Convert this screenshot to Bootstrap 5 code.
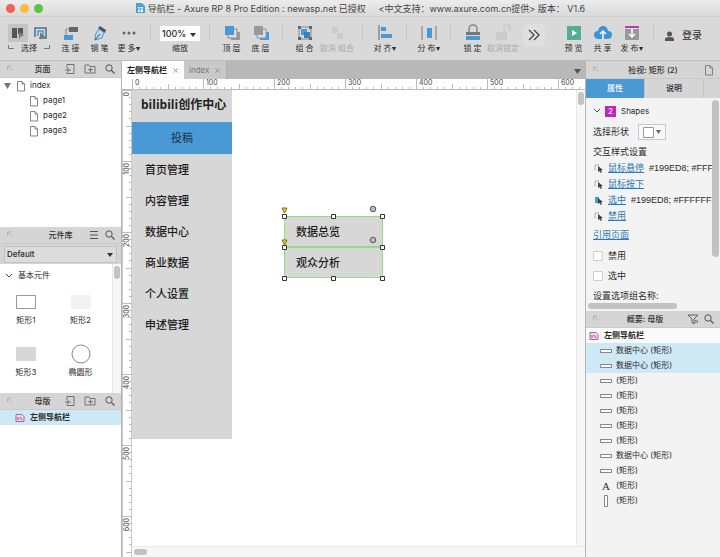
<!DOCTYPE html>
<html lang="zh-CN">
<head>
<meta charset="utf-8">
<meta name="viewport" content="width=device-width, initial-scale=1">
<title>导航栏 - Axure RP 8 Pro Edition</title>
<link href="https://cdn.jsdelivr.net/npm/bootstrap@5.3.0/dist/css/bootstrap.min.css" rel="stylesheet">
<style>
body{font-family:Inter,"Noto Sans CJK SC",sans-serif;font-size:8px;line-height:15px;color:#2b2b2b;background:#fff}
button,select,input{font:inherit;color:inherit}
button{border:0;background:none;padding:0}
svg{display:block;flex:none}
.ic{width:12px;height:12px}
.title-bar{height:17px;background:linear-gradient(#ececec,#dadada);border-bottom:1px solid #cfcfcf;font-size:9px;color:#444}
.win-dots{gap:5px;padding-left:6px}
.win-dot{width:9px;height:9px;border-radius:50%}
.doc-title{gap:2px;padding-right:44px}
.toolbar{height:44px;background:#d9d9d9;border-bottom:1px solid #bdbdbd;padding:7px 0 0 8px}
.tool{width:29px;flex:none;display:flex;flex-direction:column;align-items:center;line-height:12px;white-space:nowrap}
.tool svg{width:18px;height:18px}
.tool.wide{width:36px}
.tool.mid{width:32px}
.tool:disabled{color:#aaa}
.tool .more-arrows{width:22px;height:22px;border-radius:4px;background:#dfdfdf}
.pick-group{width:42px;flex:none;white-space:nowrap}
.pick-group button.on{background:#c4c4c4}
.pick-group button{width:20px;height:18px;display:flex;justify-content:center}
.pick-group svg{width:18px;height:18px}
.pick-group .corner{width:6px;height:6px}
.pick-label{line-height:12px}
.divide{width:15px;height:18px;flex:none}
.divide::after{content:"";display:block;width:1px;height:18px;margin:0 auto;background:#c8c8c8}
.space{width:6px;flex:none}
.space.large{width:11px}
.zoom-box{width:44px;flex:none;line-height:12px}
.drop{position:relative;display:block}
.drop select{appearance:none;display:block;width:100%}
.drop::after{content:"";position:absolute;right:4px;top:50%;margin-top:-1px;border:3px solid transparent;border-top:4px solid #333;border-bottom:0;pointer-events:none}
.zoom-box .drop{width:40px;margin:2px 0 1px}
.zoom-box select{height:15px;line-height:15px;border:0;background:#fff;font-size:9px;font-weight:500;padding:0 2px}
.side{width:122px;flex:none;border-right:1px solid #b4b4b4}
.inspect{width:135px;flex:none;border-left:1px solid #b4b4b4;background:#f3f3f3}
.head{height:17px;background:#d5d5d5;flex:none;padding:0 5px;border-bottom:1px solid #cacaca;line-height:16px}
.inspect .head.first{height:18px}
.head h2{font-size:8px;line-height:16px;font-weight:500;margin:0;color:#333}
.trow{height:15px;display:flex;align-items:center;width:100%;white-space:nowrap}
.trow .ic{margin-right:6px}
.trow .ic.near{margin-right:3px}
.sel{background:#cfe8f6}
.master-row{padding-left:14px}
.master-row .ic{margin-right:4px}
.pages{height:149px;flex:none}
.lib-top{background:#d5d5d5;height:20px;flex:none}
.lib-top select{border:1px solid #c2c2c2;background:#dcdcdc;height:17px;line-height:15px;font-weight:500;padding:0 2px}
.lib{height:129px;flex:none}
.lib-grid{display:grid;grid-template-columns:52px 57px;row-gap:17px;padding-top:9px}
.lib-grid button{display:flex;flex-direction:column;align-items:center;gap:1px;line-height:14px}
.lib-grid svg{width:22px;height:20px}
.track{width:9px;flex:none;background:#f7f7f7;border-left:1px solid #e8e8e8;padding:2px 1px}
.thumb{background:#c2c2c2;border-radius:4px}
.lib .thumb{height:13px}
.tabs{height:18px;background:#b8b8b8;flex:none}
.tabs button{padding:0 6px 0 5px;line-height:18px;gap:6px;display:flex;align-items:center}
.tabs .on{background:#fff;font-weight:700;color:#222}
.tabs .off{background:#c9c9c9;color:#777;border-right:1px solid #b0b0b0}
.tabs .close-x{width:5px;height:5px}
.ruler-x{height:11px}
.ruler-y{width:10px;flex:none}
.site-nav{width:100px;height:349px;background:#d7d7d7;font-size:11px;color:#222}
.site-nav h1{font-family:"Open Sans","Noto Sans CJK SC",sans-serif;font-size:12px;line-height:30px;height:32px;margin:0;padding-left:9px;font-weight:700;white-space:nowrap}
.site-nav a{display:block;height:31px;line-height:33px;padding-left:13px;color:#1b1b1b;text-decoration:none;font-weight:500}
.site-nav a.hot{background:#4899d4;height:32px;line-height:32px;text-align:center;padding:0;color:#234;font-weight:400}
.shape{position:absolute;left:152px;width:99px;height:31px;background:#d7d7d7;font-size:11px;line-height:31px;padding-left:11px;color:#1b1b1b;font-weight:500;border:1px solid #96dc78}
.shape.first{top:126px}
.shape.second{top:157px}
.handles{position:absolute;left:146px;top:112px;width:112px;height:82px}
.scroll-y{width:9px}
.scroll-y .thumb{height:13px}
.scroll-x{height:11px;flex:none;background:#f7f7f7;border-top:1px solid #e8e8e8;padding:2px}
.scroll-x .thumb{width:13px;height:6px}
.itabs{height:19px;background:#d5d5d5}
.itabs button{width:59px;border-right:1px solid #c4c4c4;font-weight:500}
.itabs button.on{background:#4899d4;color:#fff}
.props{height:202px;font-size:9px;line-height:16px;padding:4px 0 0 7px}
.props a{color:#2b7ab3}
.props .line{height:16px;display:flex;align-items:center;white-space:nowrap;gap:5px}
.props .line.state{gap:3px}
.props .line.state span{font-family:"Liberation Sans",sans-serif}
.props .line.state a{margin-right:2px}
.props .tall{height:20px}
.props .intro{height:18px}
.props .pick{height:24px}
.props .ref{height:22px}
.kind{font-size:8px}
.badge-2{width:11px;height:11px;background:#c026b8;color:#fff;font-size:8px;line-height:11px;text-align:center}
.shape-pick{border:1px solid #c9c9c9;width:28px;height:16px;background:#f8f8f8}
.props input{appearance:none;width:10px;height:10px;margin:0;border:1px solid #cfcfcf;background:#fff;border-radius:1px}
.ptrack{width:8px;padding:2px 1px 0 0;flex:none}
.ptrack .thumb{height:157px}
.hbar{height:11px;padding:3px 2px 2px}
.hbar .thumb{width:89px;height:6px}
.outline .trow{padding-left:14px}
.outline .trow .ic{margin-right:4px}
.outline .trow.root{padding-left:2px;background:#fafafa;font-weight:700}
.outline .letter{font:11px/12px "Liberation Serif",serif}
.login{font-size:10px;margin-left:4px}
.red{background:#ee6257}.yellow{background:#f6be3b}.green{background:#5ac449}
</style>
<script src="https://cdn.jsdelivr.net/npm/bootstrap@5.3.0/dist/js/bootstrap.bundle.min.js"></script>
</head>
<body>
<svg width="0" height="0" class="position-absolute" aria-hidden="true">
<symbol id="pin" viewBox="0 0 12 12"><path d="M2.500 7V3h4M2.500 3l4.500 4.500" fill="none" stroke="#b4b4b4"/></symbol>
<symbol id="page" viewBox="0 0 12 12"><path d="M2.500 1.500h4.500l2.500 2.500v7h-7zM7 1.500V4h2.500" fill="none" stroke="#777" stroke-width=".9"/></symbol>
<symbol id="addpage" viewBox="0 0 12 12"><path d="M3 5V1.500h7v9H3V9M1 7h6M4 5v4" fill="none" stroke="#666" stroke-width=".9"/></symbol>
<symbol id="addfolder" viewBox="0 0 12 12"><path d="M1 10V2h4l1 1.500h5V10zM4 6.700h5M6.500 4.500v4.500" fill="none" stroke="#666" stroke-width=".9"/></symbol>
<symbol id="find" viewBox="0 0 12 12"><circle cx="5" cy="5" r="3.200" fill="none" stroke="#555"/><path d="m7.500 7.500 3 3" stroke="#555" stroke-width="1.300"/></symbol>
<symbol id="lines" viewBox="0 0 12 12"><path d="M2 2.500h8M2 6h8M2 9.500h8" stroke="#555"/></symbol>
<symbol id="filter" viewBox="0 0 12 12"><path d="M1 2h10L7 6v5L5 9.500V6zM8 7l3 3M11 7 8 10" fill="none" stroke="#555" stroke-width=".9"/></symbol>
<symbol id="master" viewBox="0 0 12 12"><path d="M2 2.500h6l2 2v5H2z" fill="#f3d6ee" stroke="#8c6488" stroke-width=".9"/><path d="M4 5v3M6 5l2 3" stroke="#b03d9c"/></symbol>
<symbol id="bar" viewBox="0 0 12 12"><path d="M.500 4.500h11v3H.500z" fill="#fff" stroke="#777" stroke-width=".9"/></symbol>
<symbol id="vbar" viewBox="0 0 12 12"><path d="M4.500.500h3v11h-3z" fill="#fff" stroke="#777" stroke-width=".9"/></symbol>
<symbol id="ptr" viewBox="0 0 12 12"><path d="M2 8V3h5" fill="none" stroke="#888" stroke-dasharray="1.500 1"/><path d="m5 4 5 4-2 .3 1 2.200-1.300.4-.9-2L5 10z" fill="#444"/></symbol>
<symbol id="ptrb" viewBox="0 0 12 12"><path d="M2 3h4v6H2z" fill="#4899d4"/><path d="m5 4 5 4-2 .3 1 2.200-1.300.4-.9-2L5 10z" fill="#444"/></symbol>
<symbol id="close" viewBox="0 0 5 5"><path d="m.500.500 4 4M4.500.500l-4 4" stroke="#888" stroke-width=".9"/></symbol>
</svg>

<div class="d-flex flex-column vh-100 overflow-hidden">
<header class="title-bar d-flex align-items-center flex-shrink-0">
  <div class="win-dots d-flex"><span class="win-dot red"></span><span class="win-dot yellow"></span><span class="win-dot green"></span></div>
  <div class="doc-title flex-fill d-flex justify-content-center align-items-center text-nowrap">
    <svg class="ic" viewBox="0 0 12 12"><path d="M2 1h6l3 3v7H2z" fill="#4ba3d3"/><path d="M4 5h5v5H4z" fill="#fff"/><path d="M6 5v5M4 7h5" stroke="#4ba3d3"/></svg>
    <span>导航栏 - Axure RP 8 Pro Edition : newasp.net 已授权 &nbsp;&nbsp;&nbsp; &lt;中文支持：www.axure.com.cn提供&gt; 版本：&nbsp;V1.6</span>
  </div>
</header>

<nav class="toolbar d-flex flex-shrink-0" aria-label="工具栏">
  <div class="pick-group">
    <div class="d-flex justify-content-between">
      <button class="on" aria-label="相交选择"><svg viewBox="0 0 18 18"><path d="M3 4h5v10H3zM9 4h5v6H9z" fill="#555"/><path d="m10 7 5 5-3 .3L10 15z" fill="#777"/></svg></button>
      <button aria-label="包含选择"><svg viewBox="0 0 18 18"><path d="M4 13V4h11v10H8" fill="none" stroke="#4e6d82" stroke-width="1.500"/><path d="M7 12V7h5v5" fill="none" stroke="#479bcf" stroke-width="1.500"/><path d="m9 8 5 5-3 .4-2 2z" fill="#777"/></svg></button>
    </div>
    <div class="pick-label d-flex justify-content-between align-items-center"><svg class="corner" viewBox="0 0 6 6"><path d="M.500 0v3.500H6" fill="none" stroke="#777"/></svg>选择<svg class="corner" viewBox="0 0 6 6"><path d="M5.500 0v3.500H0" fill="none" stroke="#777"/></svg></div>
  </div>
  <div class="space"></div>
  <button class="tool"><svg viewBox="0 0 18 18"><path d="M7 3h9v5H7z" fill="#666"/><path d="M2 11h9v5H2z" fill="#4899d4"/><path d="M7 5H4v6" fill="none" stroke="#888"/></svg>连 接</button>
  <button class="tool"><svg viewBox="0 0 18 18"><path d="m8 5 5 3-2 6-7 2 1-7z" fill="#b9d8ec" stroke="#4899d4"/><path d="m9 2 6 4-1 3-7-5z" fill="#555"/><path d="m4 16 5-6" stroke="#555"/></svg>钢 笔</button>
  <button class="tool"><svg viewBox="0 0 18 18"><g fill="#666"><circle cx="4" cy="9" r="1.500"/><circle cx="9" cy="9" r="1.500"/><circle cx="14" cy="9" r="1.500"/></g></svg>更 多▾</button>
  <div class="divide"></div>
  <div class="zoom-box d-flex flex-column align-items-center"><div class="drop"><select id="zoom"><option>100%</option></select></div><label for="zoom">缩放</label></div>
  <div class="divide"></div>
  <button class="tool"><svg viewBox="0 0 18 18"><path d="M8 8h9v8H8z" fill="#999"/><path d="M5 5h9v9H5z" fill="#ddd" stroke="#888"/><path d="M2 2h9v9H2z" fill="#4899d4"/></svg>顶 层</button>
  <button class="tool"><svg viewBox="0 0 18 18"><path d="M8 8h9v8H8z" fill="#4899d4"/><path d="M5 5h9v9H5z" fill="#ddd" stroke="#79b"/><path d="M2 2h9v9H2z" fill="#999"/></svg>底 层</button>
  <div class="divide"></div>
  <button class="tool"><svg viewBox="0 0 18 18"><path d="M3 3h12v12H3z" fill="none" stroke="#888"/><path d="M5 5h6v6H5z" fill="#4899d4"/><path d="M8 8h6v6H8z" fill="#3a80b5"/><path d="M2 2h3v3H2zM13 2h3v3h-3zM2 13h3v3H2zM13 13h3v3h-3z" fill="#666"/></svg>组 合</button>
  <button class="tool wide" disabled><svg viewBox="0 0 18 18"><path d="M4 3h6v6H4zM9 9h6v6H9z" fill="#cbcbcb"/></svg>取消 组合</button>
  <div class="divide"></div>
  <button class="tool"><svg viewBox="0 0 18 18"><path d="M3 1v15" stroke="#888" stroke-width="1.500"/><path d="M5 3h5v4H5zM5 10h11v4H5z" fill="#4899d4"/></svg>对 齐▾</button>
  <div class="divide"></div>
  <button class="tool"><svg viewBox="0 0 18 18"><path d="M2 2v14M16 2v14" stroke="#999" stroke-width="1.500"/><path d="M7 4h5v10H7z" fill="#4899d4"/></svg>分 布▾</button>
  <div class="divide"></div>
  <button class="tool"><svg viewBox="0 0 18 18"><path d="M5 9V5q0-4 4-4t4 4v4" fill="none" stroke="#888" stroke-width="1.500"/><path d="M2 8h14v3H2z" fill="#777"/><path d="M2 12h14v4H2z" fill="#4899d4"/></svg>锁 定</button>
  <button class="tool mid" disabled><svg viewBox="0 0 18 18"><path d="M10 8V4q0-3 3-3t3 3v3" fill="none" stroke="#ccc" stroke-width="2"/><path d="M2 8h11v8H2z" fill="#cbcbcb"/></svg>取消锁定</button>
  <button class="tool" aria-label="更多工具"><svg class="more-arrows" viewBox="0 0 22 22"><path d="m6 6 5 5-5 5M11 6l5 5-5 5" fill="none" stroke="#444" stroke-width="1.300"/></svg></button>
  <div class="space large"></div>
  <button class="tool"><svg viewBox="0 0 18 18"><path d="M2 2h14v14H2z" fill="#56ad92"/><path d="m7 6 5 3-5 3z" fill="#fff"/></svg>预 览</button>
  <button class="tool"><svg viewBox="0 0 18 18"><path d="M4 15q-4-1-4-4 0-4 4-4 1-5 5-5t5 5q4 0 4 4 0 3-4 4z" fill="#3c94d1"/><path d="M9 15V8M6 10l3-3 3 3" fill="none" stroke="#fff" stroke-width="1.500"/></svg>共 享</button>
  <button class="tool"><svg viewBox="0 0 18 18"><path d="M2 2h14v2H2z" fill="#bd36b0"/><path d="M2 5h14v11H2z" fill="#999"/><path d="M9 5v8M6 10l3 3 3-3" fill="none" stroke="#fff" stroke-width="1.500"/></svg>发 布▾</button>
  <div class="divide"></div>
  <button class="login d-flex align-items-center align-self-start gap-2 pt-1"><svg width="9" height="10"><circle cx="4.500" cy="3" r="2.500" fill="#555"/><path d="M0 10V8q0-2 4.500-2T9 8v2z" fill="#555"/></svg>登录</button>
</nav>

<main class="d-flex flex-fill overflow-hidden">
  <aside class="side d-flex flex-column">
    <div class="head d-flex align-items-center"><svg class="ic"><use href="#pin"/></svg><h2 class="flex-fill text-center ps-1">页面</h2><div class="d-flex gap-1"><svg class="ic me-1"><use href="#addpage"/></svg><svg class="ic me-1"><use href="#addfolder"/></svg><svg class="ic"><use href="#find"/></svg></div></div>
    <div class="pages">
      <div class="trow ps-1"><svg width="7" height="6" class="me-1"><path d="M0 0h7L3.500 6z" fill="#777"/></svg><svg class="ic near"><use href="#page"/></svg>index</div>
      <div class="ps-4">
        <div class="trow"><svg class="ic ms-1 near"><use href="#page"/></svg>page1</div>
        <div class="trow"><svg class="ic ms-1 near"><use href="#page"/></svg>page2</div>
        <div class="trow"><svg class="ic ms-1 near"><use href="#page"/></svg>page3</div>
      </div>
    </div>
    <div class="head d-flex align-items-center"><svg class="ic"><use href="#pin"/></svg><h2 class="flex-fill text-center ps-3">元件库</h2><svg class="ic me-1"><use href="#lines"/></svg><svg class="ic"><use href="#find"/></svg></div>
    <div class="lib-top d-flex align-items-center px-1"><div class="drop w-100"><select aria-label="元件库"><option>Default</option></select></div></div>
    <div class="lib d-flex">
      <div class="flex-fill pt-1">
        <div class="trow ps-1"><svg width="10" height="6" class="me-1"><path d="m2 1 3 3 3-3" fill="none" stroke="#444"/></svg>基本元件</div>
        <div class="lib-grid">
          <button><svg><path d="M1.500 3.500h19v13h-19z" fill="#fff" stroke="#999"/></svg>矩形1</button>
          <button><svg><path d="M1 3h20v14H1z" fill="#f2f2f2"/></svg>矩形2</button>
          <button><svg><path d="M1 3h20v14H1z" fill="#d7d7d7"/></svg>矩形3</button>
          <button><svg><circle cx="11" cy="10" r="9" fill="#fff" stroke="#888"/></svg>椭圆形</button>
        </div>
      </div>
      <div class="track"><div class="thumb"></div></div>
    </div>
    <div class="head d-flex align-items-center"><svg class="ic"><use href="#pin"/></svg><h2 class="flex-fill text-center ps-1">母版</h2><div class="d-flex gap-1"><svg class="ic me-1"><use href="#addpage"/></svg><svg class="ic me-1"><use href="#addfolder"/></svg><svg class="ic"><use href="#find"/></svg></div></div>
    <div class="trow sel master-row fw-bold"><svg class="ic"><use href="#master"/></svg>左侧导航栏</div>
  </aside>

  <section class="flex-fill d-flex flex-column overflow-hidden">
    <div class="tabs d-flex"><button class="on">左侧导航栏 <svg class="close-x"><use href="#close"/></svg></button><button class="off">index <svg class="close-x"><use href="#close"/></svg></button><svg class="ms-auto me-1 mt-2" width="7" height="5"><path d="M0 0h7L3.500 5z" fill="#555"/></svg></div>
    <svg class="ruler-x w-100" id="rx"></svg>
    <div class="d-flex flex-fill overflow-hidden">
      <svg class="ruler-y h-100" id="ry"></svg>
      <div class="flex-fill d-flex flex-column overflow-hidden">
        <div class="flex-fill d-flex overflow-hidden">
          <div class="flex-fill position-relative overflow-hidden">
            <nav class="site-nav"><h1>bilibili创作中心</h1><a class="hot" href="#">投稿</a><a href="#">首页管理</a><a href="#">内容管理</a><a href="#">数据中心</a><a href="#">商业数据</a><a href="#">个人设置</a><a href="#">申述管理</a></nav>
            <div class="shape first">数据总览</div>
            <div class="shape second">观众分析</div>
            <svg class="handles" viewBox="0 0 112 82"><g fill="#fff" stroke="#333"><path d="M4.500 12.500h4v4h-4zM53.500 12.500h4v4h-4zM102.500 12.500h4v4h-4zM4.500 43.500h4v4h-4zM102.500 43.500h4v4h-4zM4.500 74.500h4v4h-4zM53.500 74.500h4v4h-4zM102.500 74.500h4v4h-4z"/></g><path d="M4 6h5L6.500 11zM4 38h5L6.500 43z" fill="#f5c83a" stroke="#8a6a10"/><g fill="#bbb" stroke="#555"><circle cx="95" cy="7" r="2.800"/><circle cx="95" cy="38" r="2.800"/></g></svg>
          </div>
          <div class="track scroll-y"><div class="thumb"></div></div>
        </div>
        <div class="scroll-x"><div class="thumb"></div></div>
      </div>
    </div>
  </section>

  <aside class="inspect d-flex flex-column">
    <div class="head first d-flex align-items-center"><svg class="ic"><use href="#pin"/></svg><h2 class="flex-fill text-center">检视: 矩形 (2)</h2><svg class="ic"><use href="#page"/></svg></div>
    <div class="itabs d-flex flex-shrink-0"><button class="on">属性</button><button>说明</button></div>
    <div class="d-flex overflow-hidden flex-shrink-0">
      <div class="props flex-fill overflow-hidden">
        <div class="line intro"><svg width="7" height="6"><path d="m1 1 3 3 3-3" fill="none" stroke="#555"/></svg><span class="badge-2">2</span><span class="kind">Shapes</span></div>
        <div class="line pick"><label for="pick">选择形状</label><button id="pick" class="shape-pick d-flex align-items-center justify-content-between ms-1 px-1"><svg width="11" height="11"><path d="M.500.500h10v10H.500z" fill="#fff" stroke="#999"/></svg><svg width="5" height="4"><path d="M0 0h5L2.500 4z" fill="#666"/></svg></button></div>
        <div class="line">交互样式设置</div>
        <div class="line state"><svg class="ic"><use href="#ptr"/></svg><a href="#">鼠标悬停</a><span>#199ED8; #FFF</span></div>
        <div class="line state"><svg class="ic"><use href="#ptr"/></svg><a href="#">鼠标按下</a></div>
        <div class="line state"><svg class="ic"><use href="#ptrb"/></svg><a href="#">选中</a><span>#199ED8; #FFFFFF;</span></div>
        <div class="line state"><svg class="ic"><use href="#ptr"/></svg><a href="#">禁用</a></div>
        <div class="line ref"><a href="#">引用页面</a></div>
        <div class="line tall"><input type="checkbox" id="dis"><label for="dis">禁用</label></div>
        <div class="line tall"><input type="checkbox" id="chk"><label for="chk">选中</label></div>
        <div class="line tall">设置选项组名称:</div>
      </div>
      <div class="ptrack"><div class="thumb"></div></div>
    </div>
    <div class="hbar flex-shrink-0"><div class="thumb"></div></div>
    <div class="head d-flex align-items-center"><svg class="ic"><use href="#pin"/></svg><h2 class="flex-fill text-center">概要: 母版</h2><svg class="ic me-1"><use href="#filter"/></svg><svg class="ic"><use href="#find"/></svg></div>
    <div class="outline">
      <div class="trow root"><svg class="ic"><use href="#master"/></svg>左侧导航栏</div>
      <div class="trow sel"><svg class="ic"><use href="#bar"/></svg>数据中心 (矩形)</div>
      <div class="trow sel"><svg class="ic"><use href="#bar"/></svg>数据中心 (矩形)</div>
      <div class="trow"><svg class="ic"><use href="#bar"/></svg>(矩形)</div>
      <div class="trow"><svg class="ic"><use href="#bar"/></svg>(矩形)</div>
      <div class="trow"><svg class="ic"><use href="#bar"/></svg>(矩形)</div>
      <div class="trow"><svg class="ic"><use href="#bar"/></svg>(矩形)</div>
      <div class="trow"><svg class="ic"><use href="#bar"/></svg>(矩形)</div>
      <div class="trow"><svg class="ic"><use href="#bar"/></svg>数据中心 (矩形)</div>
      <div class="trow"><svg class="ic"><use href="#bar"/></svg>(矩形)</div>
      <div class="trow"><span class="ic letter text-center">A</span>(矩形)</div>
      <div class="trow"><svg class="ic"><use href="#vbar"/></svg>(矩形)</div>
    </div>
  </aside>
</main>
</div>
<script>
// Rulers: 100 units take 71 pixels on screen
const rx=document.getElementById('rx'),ry=document.getElementById('ry');
function drawRulers(){
  const w=rx.clientWidth,h=ry.clientHeight,t='font-size="7" fill="#444"';
  let x=`<path d="M0 10.500H${w}M10.500 0V11" stroke="#bbb"/>`,y=`<path d="M.500 0V${h}M9.500 0V${h}" stroke="#ccc"/>`;
  for(let i=0;i*7.1<Math.max(w,h);i++){
    const p=Math.round(i*7.1),n=i%10==0?11:i%5==0?6:3;
    if(p+11<w)x+=`<path d="M${p+10.5} ${11-n}v${n}" stroke="#bbb"/>`;
    if(p<h)y+=`<path d="M${10-n} ${p+.5}h${n}" stroke="#bbb"/>`;
    if(i%10==0){
      if(p+26<w)x+=`<text x="${p+13}" y="6" ${t}>${i*10}</text>`;
      if(p+16<h)y+=`<text transform="translate(7 ${p+2}) rotate(-90)" text-anchor="end" ${t}>${i*10}</text>`;
    }
  }
  rx.innerHTML=x;ry.innerHTML=y;
}
drawRulers();
addEventListener('resize',drawRulers);
</script>
</body>
</html>
